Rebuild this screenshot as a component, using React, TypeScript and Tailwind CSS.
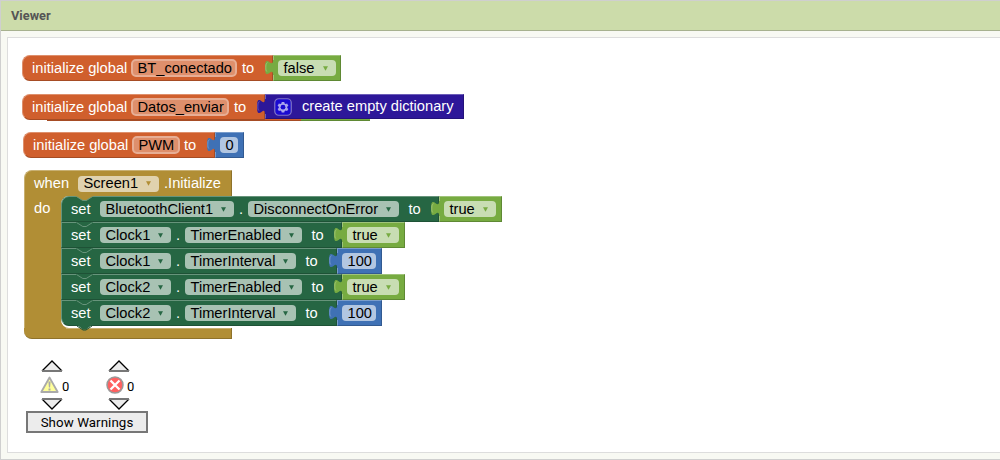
import type { ReactNode } from "react";

type Tone = "orange" | "green" | "blue" | "purple" | "forest";

const slab: Record<Tone, string> = {
  orange: "bg-[#d05f2d] border-t-[#de8f6c] border-l-[#de8f6c] border-b-[#a64c24] border-r-[#a64c24]",
  green: "bg-[#77ab41] border-t-[#a0c47a] border-l-[#a0c47a] border-b-[#5f8934] border-r-[#5f8934]",
  blue: "bg-[#3f71b5] border-t-[#799ccb] border-l-[#799ccb] border-b-[#325a91] border-r-[#325a91]",
  purple: "bg-[#2d1799] border-t-[#6c5db8] border-l-[#6c5db8] border-b-[#24127a] border-r-[#24127a]",
  forest: "bg-[#266643] border-t-[#67947b] border-l-[#67947b] border-b-[#1e5236] border-r-[#1e5236]",
};

const fills: Record<Tone, string> = {
  orange: "#d05f2d",
  green: "#77ab41",
  blue: "#3f71b5",
  purple: "#2d1799",
  forest: "#266643",
};

const lights: Record<Tone, string> = {
  orange: "#de8f6c",
  green: "#a0c47a",
  blue: "#799ccb",
  purple: "#6c5db8",
  forest: "#67947b",
};

function Slab({ tone, className, children }: { tone: Tone; className: string; children?: ReactNode }) {
  return (
    <div className={`relative box-border flex shrink-0 items-center border ${slab[tone]} ${className}`}>{children}</div>
  );
}

function Label({ className, children }: { className: string; children: ReactNode }) {
  return <span className={`shrink-0 whitespace-nowrap text-white ${className}`}>{children}</span>;
}

function Field({ className, color, children }: { className: string; color?: string; children: ReactNode }) {
  return (
    <span
      className={`flex h-4 shrink-0 items-center justify-between whitespace-nowrap rounded bg-white/60 pl-[5.500px] text-black ${className}`}
    >
      <span>{children}</span>
      {color && (
        <svg className="mr-2" width="5" height="5" viewBox="0 0 5 5">
          <path d="M0 .3h5L2.500 4.800z" fill={color} />
        </svg>
      )}
    </span>
  );
}

function NameField({ className, children }: { className: string; children: ReactNode }) {
  return (
    <span
      className={`box-border flex h-[18px] shrink-0 items-center whitespace-nowrap rounded-[5px] border-2 border-[#e7ae95] bg-[#de8f6c] pl-[4.500px] text-black ${className}`}
    >
      {children}
    </span>
  );
}

function Plug({ tone }: { tone: Tone }) {
  return (
    <svg className="absolute -left-[9px] top-[-1px]" width="10" height="24" viewBox="0 0 10 24">
      <path d="M10 20H8c0-10-8 8-8-7.500s8 2.500 8-7.500h2z" fill={fills[tone]} />
      <path d="M1.800 16.500C.8 15.500.8 14 .8 12.500c0-4 .8-4.500 1.800-4.800" fill="none" stroke={lights[tone]} strokeWidth="1" />
    </svg>
  );
}

function BoolBlock({ value, width, fieldWidth }: { value: string; width: string; fieldWidth: string }) {
  return (
    <Slab tone="green" className={`h-[26px] pl-1 ${width}`}>
      <Plug tone="green" />
      <Field className={fieldWidth} color="#77ab41">
        {value}
      </Field>
    </Slab>
  );
}

function NumberBlock({ value, width, fieldWidth }: { value: string; width: string; fieldWidth: string }) {
  return (
    <Slab tone="blue" className={`h-[26px] pl-1 ${width}`}>
      <Plug tone="blue" />
      <Field className={fieldWidth}>{value}</Field>
    </Slab>
  );
}

type Setter = {
  component: string;
  componentWidth: string;
  property: string;
  propertyWidth: string;
  bodyWidth: string;
  value: string;
};

const setters: Setter[] = [
  { component: "BluetoothClient1", componentWidth: "w-[134px]", property: "DisconnectOnError", propertyWidth: "w-[151px]", bodyWidth: "w-[378px]", value: "true" },
  { component: "Clock1", componentWidth: "w-[71px]", property: "TimerEnabled", propertyWidth: "w-[117px]", bodyWidth: "w-[281px]", value: "true" },
  { component: "Clock1", componentWidth: "w-[71px]", property: "TimerInterval", propertyWidth: "w-[111px]", bodyWidth: "w-[276px]", value: "100" },
  { component: "Clock2", componentWidth: "w-[71px]", property: "TimerEnabled", propertyWidth: "w-[117px]", bodyWidth: "w-[281px]", value: "true" },
  { component: "Clock2", componentWidth: "w-[71px]", property: "TimerInterval", propertyWidth: "w-[111px]", bodyWidth: "w-[276px]", value: "100" },
];

function SetterRow({ item, index }: { item: Setter; index: number }) {
  const corner = index === 0 ? "rounded-tl-lg" : index === setters.length - 1 ? "rounded-bl-lg" : "";
  return (
    <div className="flex">
      <Slab tone="forest" className={`h-[26px] pl-[9px] ${item.bodyWidth} ${corner}`}>
        <svg className="absolute -top-px left-[14px]" width="17" height="6" viewBox="0 0 17 6">
          <path d="M0 0h17v1h-1l-6 4H7L1 1H0z" fill={index === 0 ? "#b18e35" : "#266643"} />
          <path d="M.5 .5 6.800 4.500h3.400L16.500 .5" fill="none" stroke="#67947b" />
        </svg>
        <Label className="w-[29px]">set</Label>
        <Field className={item.componentWidth} color="#266643">
          {item.component}
        </Field>
        <Label className="w-[14px] pl-[5px]">.</Label>
        <Field className={item.propertyWidth} color="#266643">
          {item.property}
        </Field>
        <Label className="pl-[9.500px]">to</Label>
        {index === setters.length - 1 && (
          <svg className="absolute left-[14px] top-6 z-10" width="17" height="6" viewBox="0 0 17 6">
            <path d="M1 0h15l-6 4.500H7z" fill="#266643" />
            <path d="M1 1 7 5h3l6-4" fill="none" stroke="#1e5236" />
          </svg>
        )}
      </Slab>
      {item.value === "true" ? (
        <BoolBlock value="true" width="w-[63px]" fieldWidth="w-[52px]" />
      ) : (
        <NumberBlock value={item.value} width="w-[45px]" fieldWidth="w-[34px]" />
      )}
    </div>
  );
}

function EventBlock() {
  return (
    <div className="absolute left-4 top-[132px] flex flex-col">
      <div className="box-border flex h-[26px] w-[208px] items-center rounded-tl-lg border-l border-r border-t border-l-[#c8b072] border-r-[#8e722a] border-t-[#c8b072] bg-[#b18e35] pl-[9px]">
        <Label className="w-11">when</Label>
        <Field className="w-[81px]" color="#b18e35">
          Screen1
        </Field>
        <Label className="pl-[5px]">.Initialize</Label>
      </div>
      <div className="flex">
        <div className="box-border h-[132px] w-[37px] border-l border-[#c8b072] bg-[#b18e35] pl-[9px] pt-[4px]">
          <Label className="block leading-4">do</Label>
        </div>
        <div className="relative flex flex-col">
          <svg className="absolute left-0 top-0" width="8" height="8" viewBox="0 0 8 8">
            <path d="M0 8V0h8a8 8 0 0 0-8 8z" fill="#b18e35" />
          </svg>
          <svg className="absolute bottom-0 left-0" width="8" height="8" viewBox="0 0 8 8">
            <path d="M0 0v8h8a8 8 0 0 1-8-8z" fill="#b18e35" />
          </svg>
          {setters.map((item, i) => (
            <SetterRow key={i} item={item} index={i} />
          ))}
        </div>
      </div>
      <div className="box-border h-[11px] w-[208px] rounded-bl-lg border-b border-r border-[#8e722a] bg-[#b18e35]">
        <div className="ml-[42px] h-px bg-[#c8b072]" />
      </div>
    </div>
  );
}

function Gear() {
  return (
    <svg className="ml-[8px] mr-[10px] shrink-0" width="18" height="18" viewBox="0 0 18 18">
      <rect x=".75" y=".75" width="16.500" height="16.500" rx="4" fill="#1a0ad1" stroke="#8176c6" strokeWidth="1.200" />
      <path
        d="M7.700 3.900h2.600l.3 1.500 1 .6 1.500-.5 1.300 2.200-1.200 1v1.200l1.200 1-1.300 2.200-1.500-.5-1 .6-.3 1.400H7.700l-.3-1.400-1-.6-1.500.5-1.300-2.200 1.200-1V8.700l-1.200-1 1.300-2.200 1.500.5 1-.6z"
        fill="#a9a4ed"
      />
      <circle cx="9" cy="9.200" r="2.400" fill="#1a0ad1" />
    </svg>
  );
}

function Arrow({ down }: { down?: boolean }) {
  return (
    <svg className="block" width="22" height="12" viewBox="0 0 22 12">
      {down ? (
        <>
          <path d="M1 1 11 11 21 1" fill="#ececec" stroke="#000" strokeWidth="1.300" />
          <path d="M1 1h20" stroke="#777" strokeWidth="2" />
        </>
      ) : (
        <>
          <path d="M1 11 11 1 21 11" fill="#ececec" stroke="#000" strokeWidth="1.300" />
          <path d="M1 11h20" stroke="#777" strokeWidth="2" />
        </>
      )}
    </svg>
  );
}

function WarningPanel() {
  return (
    <div className="absolute left-[18px] top-[322px] font-[Roboto,sans-serif] text-[13px] text-black">
      <div className="flex gap-[39px]">
        <div className="flex w-7 flex-col">
          <div className="ml-[15px]">
            <Arrow />
          </div>
          <div className="ml-[14px] flex h-[26px] w-8 items-center">
            <svg className="shrink-0" width="19" height="18" viewBox="0 0 19 18">
              <path d="M9.500 1.500 17.700 16H1.300z" fill="#ffff99" stroke="#aaa" strokeWidth="1.800" strokeLinejoin="round" />
              <path d="M8.400 5.500h2.200l-.5 6H8.900zM8.500 12.500h2v2h-2z" fill="#aaa" />
            </svg>
            <span className="ml-[3px] mt-[3px]">0</span>
          </div>
          <div className="ml-[15px]">
            <Arrow down />
          </div>
        </div>
        <div className="flex w-11 flex-col">
          <div className="ml-[15px]">
            <Arrow />
          </div>
          <div className="ml-[13px] flex h-[26px] w-8 items-center">
            <svg className="shrink-0" width="18" height="18" viewBox="0 0 18 18">
              <circle cx="9" cy="9" r="8" fill="#ff6161" stroke="#999" strokeWidth="1.500" />
              <path d="m4.500 4.500 9 9m0-9-9 9" stroke="#fff" strokeWidth="2.300" />
            </svg>
            <span className="ml-[3px] mt-[3px]">0</span>
          </div>
          <div className="ml-[15px]">
            <Arrow down />
          </div>
        </div>
      </div>
      <button className="mt-px box-border flex h-[22px] w-[122px] items-center justify-center border-2 border-[#777] bg-[#ececec] pt-px text-[13.300px] tracking-[0.080px]">
        Show Warnings
      </button>
    </div>
  );
}

function Workspace() {
  return (
    <div className="relative ml-[6px] mt-[6px] box-border h-[416px] overflow-hidden border-y border-l border-[#ddd] bg-white font-['Liberation_Sans',Arial,sans-serif] text-[14.667px] leading-none">
      <div className="absolute left-[39px] top-[80px] flex">
        <div className="h-[3px] w-[254px] border-b border-[#a64c24] bg-[#d05f2d]" />
        <div className="h-[3px] w-[69px] border-b border-[#5f8934] bg-[#77ab41]" />
      </div>

      <div className="absolute left-[14px] top-[17px] flex">
        <Slab tone="orange" className="h-[26px] w-[251px] rounded-l-lg pl-[9px]">
          <Label className="w-[99px]">initialize global</Label>
          <NameField className="w-[106px]">BT_conectado</NameField>
          <Label className="pl-[5px]">to</Label>
        </Slab>
        <BoolBlock value="false" width="w-[68px]" fieldWidth="w-[57.500px]" />
      </div>

      <div className="absolute left-[14px] top-[56px] flex">
        <Slab tone="orange" className="h-[26px] w-[243px] rounded-l-lg pl-[9px]">
          <Label className="w-[99px]">initialize global</Label>
          <NameField className="w-[98px]">Datos_enviar</NameField>
          <Label className="pl-[5px]">to</Label>
        </Slab>
        <Slab tone="purple" className="h-[25px] w-[199px]">
          <Plug tone="purple" />
          <Gear />
          <Label className="">create empty dictionary</Label>
        </Slab>
      </div>

      <div className="absolute left-[15px] top-[94px] flex">
        <Slab tone="orange" className="h-[26px] w-[192px] rounded-l-lg pl-[9px]">
          <Label className="w-[99px]">initialize global</Label>
          <NameField className="w-[48px]">PWM</NameField>
          <Label className="pl-[4px]">to</Label>
        </Slab>
        <NumberBlock value="0" width="w-[29px]" fieldWidth="w-[18px]" />
      </div>

      <EventBlock />
      <WarningPanel />
    </div>
  );
}

export default function App() {
  return (
    <div className="box-border h-[460px] w-[1000px] overflow-hidden border-y border-l border-[#cfcfcf] bg-[#f8f9f3]">
      <div className="box-border flex h-[30px] items-center border-b border-[#a7b18f] bg-[#ccdcaa] pl-[10px] font-[Roboto,sans-serif] text-[12.800px] font-bold text-[#555]">
        Viewer
      </div>
      <Workspace />
    </div>
  );
}
